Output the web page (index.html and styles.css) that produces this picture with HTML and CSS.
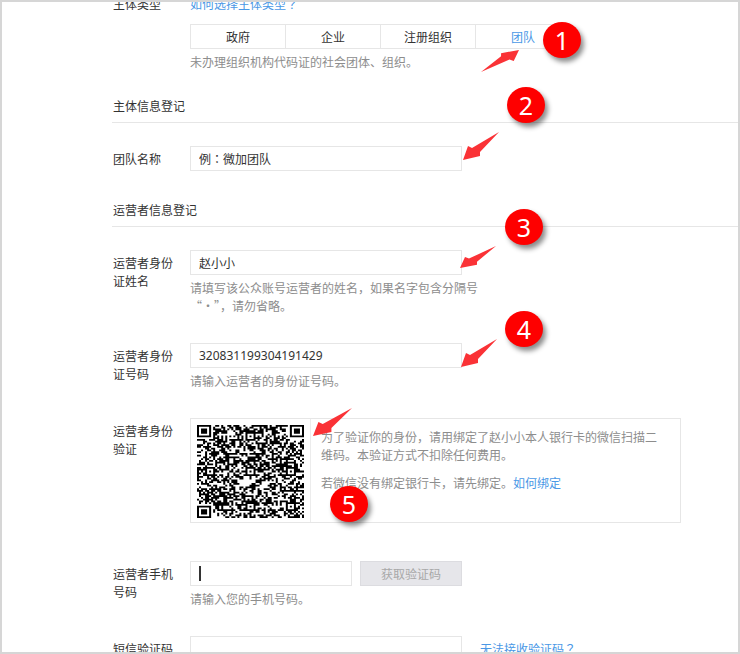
FILE: index.html
```
<!DOCTYPE html>
<html lang="zh-CN">
<head>
  <meta charset="UTF-8" />
  <title>主体信息登记</title>
  <meta name="viewport" content="width=device-width, initial-scale=1.0" />
  <link rel="stylesheet" href="styles.css">
</head>
<body>
  <div class="page">
    <form class="form">
      <div class="row row-type">
        <span class="label">主体类型</span>
        <div class="field">
          <a href="#">如何选择主体类型<span class="mark" lang="ja">？</span></a>
          <div class="tabs">
            <button type="button">政府</button>
            <button type="button">企业</button>
            <button type="button">注册组织</button>
            <button type="button" class="active">团队</button>
          </div>
          <p class="hint">未办理组织机构代码证的社会团体、组织。</p>
        </div>
      </div>

      <h2>主体信息登记</h2>

      <div class="row row-team">
        <label class="label" for="team">团队名称</label>
        <div class="field">
          <input type="text" id="team" class="mark" lang="ja" value="例：微加团队" />
        </div>
      </div>

      <h2>运营者信息登记</h2>

      <div class="row">
        <label class="label" for="name">运营者身份证姓名</label>
        <div class="field">
          <input type="text" id="name" value="赵小小" />
          <p class="hint">请填写该公众账号运营者的姓名，如果名字包含分隔号<br>“·”，请勿省略。</p>
        </div>
      </div>

      <div class="row">
        <label class="label" for="idcard">运营者身份证号码</label>
        <div class="field">
          <input type="text" id="idcard" value="320831199304191429" />
          <p class="hint">请输入运营者的身份证号码。</p>
        </div>
      </div>

      <div class="row row-verify">
        <span class="label">运营者身份验证</span>
        <div class="field">
          <div class="verify">
            <div class="qr">
              <svg viewBox="0 0 53 53" preserveAspectRatio="none">
                <path id="qrPath" d="" />
              </svg>
            </div>
            <div class="verify-text">
              <p>为了验证你的身份，请用绑定了赵小小本人银行卡的微信扫描二维码。本验证方式不扣除任何费用。</p>
              <p>若微信没有绑定银行卡，请先绑定。<a href="#">如何绑定</a></p>
            </div>
          </div>
        </div>
      </div>

      <div class="row">
        <label class="label" for="phone">运营者手机号码</label>
        <div class="field">
          <div class="inline">
            <input type="text" id="phone" class="short" />
            <button type="button" class="send" disabled>获取验证码</button>
          </div>
          <p class="hint">请输入您的手机号码。</p>
        </div>
      </div>

      <div class="row">
        <label class="label" for="code">短信验证码</label>
        <div class="field">
          <div class="inline">
            <input type="text" id="code" />
            <a href="#" class="help">无法接收验证码<span class="mark" lang="ja">？</span></a>
          </div>
        </div>
      </div>
    </form>

    <!-- step markers -->
    <svg class="arrow arrow-1" viewBox="0 0 36 28" preserveAspectRatio="none"><path d="M0 28L5 14L9 16L36 0L17 20L17 24Z" /></svg>
    <svg class="arrow arrow-2" viewBox="0 0 36 28" preserveAspectRatio="none"><path d="M0 28L5 14L9 16L36 0L17 20L17 24Z" /></svg>
    <svg class="arrow arrow-3" viewBox="0 0 36 28" preserveAspectRatio="none"><path d="M0 28L5 14L9 16L36 0L17 20L17 24Z" /></svg>
    <svg class="arrow arrow-4" viewBox="0 0 36 28" preserveAspectRatio="none"><path d="M0 28L5 14L9 16L36 0L17 20L17 24Z" /></svg>
    <svg class="arrow arrow-5" viewBox="0 0 36 28" preserveAspectRatio="none"><path d="M0 28L5 14L9 16L36 0L17 20L17 24Z" /></svg>
    <span class="step step-1">1</span>
    <span class="step step-2">2</span>
    <span class="step step-3">3</span>
    <span class="step step-4">4</span>
    <span class="step step-5">5</span>
  </div>

  <script src="qr.js"></script>
</body>
</html>
```
FILE: styles.css
```
* {
  box-sizing: border-box;
}

body {
  margin: 0;
  font-family: "Noto Sans CJK SC", sans-serif;
  font-size: 12px;
  line-height: 18px;
  color: #333;
  background: #fff;
}

.page {
  position: relative;
  height: 100vh;
  border: 2px solid #d6d6d6;
  overflow: hidden;
}

.form {
  margin-top: -7px;
  margin-left: 110px;
}

a {
  color: #4a98e6;
  text-decoration: none;
}

p {
  margin: 0;
}

h2 {
  margin: 0 0 23px;
  padding: 0 0 7px 1px;
  border-bottom: 1px solid #e6e6e6;
  font-size: 12px;
  font-weight: normal;
}

.row {
  display: flex;
  margin-bottom: 28px;
}

.label {
  flex: none;
  width: 63px;
  margin: 4px 14px 0 1px;
}

.field {
  flex: 1;
  min-width: 0;
}

.row-type {
  margin-bottom: 26px;
}

.row-type .label {
  margin-top: 0;
}

.row-team {
  margin-bottom: 30px;
}

.row-verify {
  margin-bottom: 38px;
}

.hint {
  margin-top: 4px;
  color: #8d8d8d;
}

input,
button {
  height: 25px;
  border: 1px solid #e6e6e6;
  border-radius: 0;
  background: #fff;
  color: #333;
  font-family: "Noto Sans", "Noto Sans CJK SC", sans-serif;
  font-size: 12px;
}

input {
  display: block;
  width: 272px;
  padding: 0 8px;
  outline: none;
}

/* full-width punctuation centred in its cell */
.mark {
  font-family: "Noto Sans CJK JP", sans-serif;
}

.short {
  width: 162px;
  /* text cursor */
  background: linear-gradient(#333, #333) 8px center / 2px 15px no-repeat #fff;
}

.inline {
  display: flex;
  gap: 8px;
}

.send {
  width: 102px;
  padding: 0;
  background: #e6e6ea;
  border-color: #dcdce0;
  color: #a8a8a8;
}

.help {
  margin-left: 10px;
  padding-top: 4px;
}

.tabs {
  display: flex;
  width: 381px;
  margin-top: 11px;
}

.tabs button {
  flex: 1;
  padding: 0;
  border-right: none;
}

.tabs button:last-child {
  border-right: 1px solid #e6e6e6;
}

.tabs .active {
  color: #4a98e6;
}

.verify {
  display: flex;
  max-width: 491px;
  height: 105px;
  border: 1px solid #e6e6e6;
}

.qr {
  flex: none;
  width: 120px;
  padding: 6px;
  border-right: 1px solid #ececec;
}

.qr svg {
  display: block;
  width: 107px;
  height: 93px;
}

.verify-text {
  padding: 9px 14px 0 10px;
  color: #8d8d8d;
}

.verify-text p {
  margin-bottom: 10px;
}

.step {
  position: absolute;
  width: 38px;
  height: 36px;
  border-radius: 50%;
  background: #fe0000;
  box-shadow: 3px 4px 5px rgba(0, 0, 0, 0.45);
  color: #fff;
  font-family: "Noto Sans", sans-serif;
  font-size: 25px;
  line-height: 36px;
  text-align: center;
}

.step-1 { left: 541px; top: 20px; }
.step-2 { left: 505px; top: 85px; }
.step-3 { left: 503px; top: 207px; }
.step-4 { left: 503px; top: 309px; }
.step-5 { left: 328px; top: 484px; }

.arrow {
  position: absolute;
  width: 36px;
  height: 28px;
  fill: #fa3236;
}

.arrow-1 { left: 479px; top: 48px; width: 38px; height: 22px; transform: rotate(180deg); }
.arrow-2 { left: 461px; top: 130px; }
.arrow-3 { left: 458px; top: 244px; height: 22px; }
.arrow-4 { left: 459px; top: 337px; }
.arrow-5 { left: 311px; top: 406px; width: 39px; }
```
FILE: qr.js
```
const SIZE = 53;
const centers = [6, 26, 46];
const grid = [];
let seed = 20831;

function random() {
  seed = (seed * 1103515245 + 12345) % 2147483648;
  return seed / 2147483648;
}

// concentric square: dark ring, light ring, dark core
function drawSquare(cx, cy, radius, lightRing) {
  for (let y = cy - radius - 1; y <= cy + radius + 1; y++) {
    for (let x = cx - radius - 1; x <= cx + radius + 1; x++) {
      if (!grid[y] || x < 0 || x >= SIZE) continue;
      const d = Math.max(Math.abs(x - cx), Math.abs(y - cy));
      if (d > radius && radius < 3) continue;
      grid[y][x] = d !== lightRing && d <= radius;
    }
  }
}

for (let y = 0; y < SIZE; y++) {
  grid.push([]);
  for (let x = 0; x < SIZE; x++) {
    grid[y].push(random() < 0.54);
  }
}

for (let i = 8; i < SIZE - 8; i++) {
  grid[6][i] = i % 2 === 0;
  grid[i][6] = i % 2 === 0;
}

centers.forEach(cy => {
  centers.forEach(cx => {
    const corner = (cx === 6 && cy !== 26) || (cy === 6 && cx === 46);
    if (!corner) drawSquare(cx, cy, 2, 1);
  });
});

drawSquare(3, 3, 3, 2);
drawSquare(SIZE - 4, 3, 3, 2);
drawSquare(3, SIZE - 4, 3, 2);

// light spot of the logo under the centre
for (let y = 29; y < 35; y++) {
  for (let x = 21; x < 28; x++) {
    if (Math.abs(x - 24) + Math.abs(y - 32) < 4) grid[y][x] = false;
  }
}

// neighbouring dark modules are drawn as one run
let d = "";
grid.forEach((line, y) => {
  let x = 0;
  while (x < SIZE) {
    let end = x;
    while (end < SIZE && line[end]) end++;
    if (end > x) d += `M${x} ${y}H${end}V${y + 1}H${x}Z`;
    x = end + 1;
  }
});
document.getElementById("qrPath").setAttribute("d", d);
```
